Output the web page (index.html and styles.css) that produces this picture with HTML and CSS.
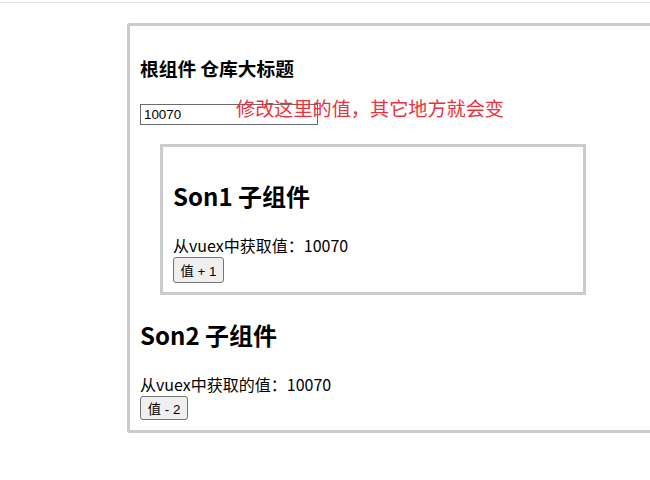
FILE: index.html
```html
<!DOCTYPE html>
<html lang="zh-CN">
<head>
<meta charset="utf-8">
<title>vuex demo</title>
<link rel="stylesheet" href="styles.css">
</head>
<body>
<div class="topline"></div>
<div class="app">
  <h3 class="title">根组件 仓库大标题</h3>
  <div class="field">
    <input class="count-input" type="text" value="10070">
    <span class="tip">修改这里的值，其它地方就会变</span>
  </div>
  <div class="son1">
    <h2 class="son-title">Son1 子组件</h2>
    <div class="son-text">从vuex中获取值：10070</div>
    <button class="btn btn-one">值 + 1</button>
  </div>
  <div class="son2">
    <h2 class="son-title">Son2 子组件</h2>
    <div class="son-text">从vuex中获取的值：10070</div>
    <button class="btn btn-two">值 - 2</button>
  </div>
</div>
</body>
</html>
```
FILE: styles.css
```css
html, body {
  margin: 0;
  padding: 0;
  overflow: hidden;
  background: #fff;
}
body {
  font-family: "Noto Sans CJK SC", "Noto Sans", sans-serif;
  font-size: 16px;
  color: #000;
}
.topline {
  margin-top: 2px;
  height: 1px;
  background: #e2e2e2;
}
.app {
  margin: 20px 0 0 127px;
  width: 600px;
  border: 3px solid #cccccc;
  border-radius: 2px 0 0 2px;
  padding: 10px 10px 10px 10px;
}
.title {
  font-size: 18.72px;
  font-weight: bold;
  margin: 18px 0 23px 0;
  line-height: 27px;
}
.field {
  position: relative;
  display: flex;
  height: 21px;
}
.count-input {
  box-sizing: border-box;
  width: 178px;
  height: 21px;
  margin: 0;
  padding: 1px 3px;
  border: 1px solid #6b6b6b;
  border-radius: 0;
  font-family: "Liberation Sans", Arial, sans-serif;
  font-size: 13.33px;
  color: #000;
  background: #fff;
  outline: none;
}
.tip {
  position: absolute;
  left: 96px;
  top: -9px;
  font-size: 19.15px;
  line-height: 27px;
  color: #f0303c;
  white-space: nowrap;
}
.son1 {
  margin: 19px 0 0 20px;
  width: 400px;
  border: 3px solid #cccccc;
  padding: 10px 10px 9px 10px;
}
.son2 {
  margin-top: 22px;
}
.son-title {
  font-size: 24px;
  font-weight: bold;
  margin: 21px 0 20px 0;
  line-height: 36px;
}
.son-text {
  line-height: 23px;
}
.btn {
  box-sizing: border-box;
  height: 25px;
  margin: 0;
  padding: 0 6px;
  border: 1px solid #767676;
  border-radius: 3px;
  background: #efefef;
  font-family: "Liberation Sans", "Noto Sans CJK SC", sans-serif;
  font-size: 13.33px;
  color: #000;
  display: block;
}
.btn-one {
  height: 26px;
  width: 51px;
}
.btn-two {
  height: 24px;
  width: 48px;
}
```
